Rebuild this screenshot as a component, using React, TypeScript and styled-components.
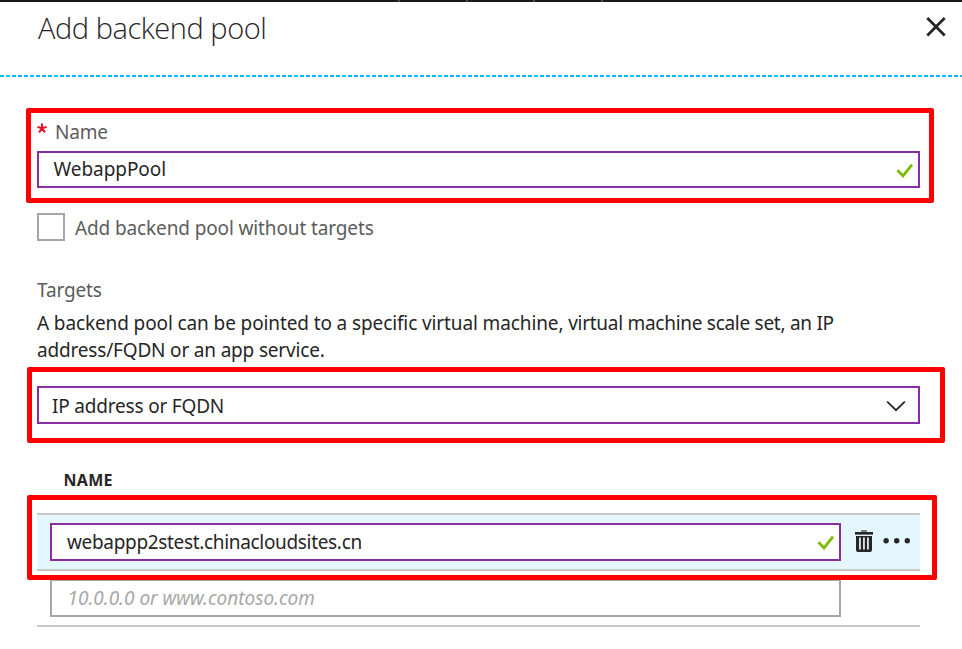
import React from "react";
import styled, { createGlobalStyle } from "styled-components";

const GlobalStyle = createGlobalStyle`
  * { box-sizing: border-box; }
  html, body { margin: 0; background: #fff; overflow: hidden; }
  body { font-family: "Noto Sans", "Open Sans", sans-serif; color: #262626; }
`;

const Blade = styled.main`
  position: relative;
  width: 962px;
  height: 649px;
  overflow: hidden;
  background: #fff;
`;

const TopEdge = styled.div`
  height: 2px;
  padding-left: 398px;
  display: flex;
  gap: 65.5px;
  background: #1b1a1b;
`;

const Tick = styled.span`
  width: 2px;
  height: 2px;
  background: #4a4a4a;
`;

const Header = styled.header`
  height: 73px;
  padding: 5px 16px 0 37px;
  display: flex;
  justify-content: space-between;
  align-items: flex-start;
`;

const Title = styled.h1`
  margin: 0;
  font-family: "Open Sans", "Noto Sans", sans-serif;
  font-size: 29px;
  font-weight: 300;
  line-height: 42px;
  letter-spacing: -0.45px;
  padding-left: 1px;
  white-space: nowrap;
`;

const IconButton = styled.button<{ $w: number; $h: number }>`
  width: ${(p) => p.$w}px;
  height: ${(p) => p.$h}px;
  padding: 0;
  border: 0;
  background: none;
  display: block;
  flex: none;
  svg { display: block; }
`;

const CloseButton = styled(IconButton)`
  margin-top: 9px;
`;

const Divider = styled.div`
  height: 2px;
  background: repeating-linear-gradient(90deg, #00bcf2 0 4px, #fff 4px 6px);
`;

const Form = styled.form`
  width: 883px;
  margin-left: 37px;
  padding-top: 42px;
  display: flex;
  flex-direction: column;
`;

const Label = styled.label<{ $spacing: number }>`
  height: 27px;
  line-height: 27px;
  font-size: 19px;
  letter-spacing: ${(p) => p.$spacing}px;
  color: #5c5c5c;
  white-space: nowrap;
`;

const FieldHead = styled.div`
  height: 32px;
  display: flex;
  gap: 8px;
`;

const Required = styled.span`
  width: 10px;
  height: 27px;
  svg { display: block; margin-top: 4px; }
`;

const Field = styled.div<{ $active?: boolean; $h: number; $right: number }>`
  height: ${(p) => p.$h}px;
  padding: 0 ${(p) => p.$right}px 0 0;
  border: 2px solid ${(p) => (p.$active ? "#892da3" : "#a6a6a6")};
  background: #fff;
  display: flex;
  align-items: center;
  justify-content: space-between;
  svg { flex: none; display: block; margin-top: 2px; }
`;

const Value = styled.span<{ $left: number; $spacing: number; $hint?: boolean; $drop?: number }>`
  margin-left: ${(p) => p.$left}px;
  padding-top: ${(p) => p.$drop ?? 0}px;
  font-size: 19px;
  line-height: 27px;
  letter-spacing: ${(p) => p.$spacing}px;
  font-style: ${(p) => (p.$hint ? "italic" : "normal")};
  color: ${(p) => (p.$hint ? "#a8a8a8" : "#262626")};
  white-space: nowrap;
`;

const CheckRow = styled.div`
  height: 28px;
  margin-top: 25px;
  display: flex;
  align-items: flex-start;
  gap: 10px;
  label { padding-top: 2px; }
`;

const CheckBox = styled.span`
  width: 28px;
  height: 28px;
  border: 2px solid #a6a6a6;
`;

const Targets = styled.section`
  margin-top: 36px;
  display: flex;
  flex-direction: column;
`;

const Description = styled.p`
  margin: 6px 0 22px;
  height: 54px;
  font-size: 19px;
  line-height: 27px;
  white-space: nowrap;
`;

const Run = styled.span<{ $spacing: number }>`
  letter-spacing: ${(p) => p.$spacing}px;
`;

const ColumnHead = styled.div`
  height: 89px;
  padding: 43px 0 0 26.5px;
  font-size: 16px;
  font-weight: 700;
  line-height: 27px;
  letter-spacing: 0.3px;
`;

const ActiveRow = styled.div`
  height: 58px;
  padding: 8px 9px 0 13px;
  border: solid #c8c8c8;
  border-width: 2px 0;
  background: #e4f7fe;
  display: flex;
  align-items: flex-start;
`;

const EntryField = styled(Field)`
  width: 791px;
  flex: none;
`;

const Actions = styled.div`
  margin: 6px 0 0 14px;
  display: flex;
  gap: 9px;
`;

const EmptyRow = styled.div`
  height: 56px;
  padding: 8px 0 0 13px;
  border-bottom: 2px solid #c8c8c8;
`;

const Highlight = styled.div<{ $x: number; $y: number; $w: number; $h: number }>`
  position: absolute;
  left: ${(p) => p.$x}px;
  top: ${(p) => p.$y}px;
  width: ${(p) => p.$w}px;
  height: ${(p) => p.$h}px;
  border: 5px solid #f00;
  border-radius: 2px;
  pointer-events: none;
`;

const Check = () => (
  <svg width="18" height="16" viewBox="0 0 18 16" fill="none" stroke="#7fba00" strokeWidth="2.8">
    <path d="M1.4 7.2 L7 12.8 L16 1.6" />
  </svg>
);

const Asterisk = () => (
  <svg width="10" height="11" viewBox="0 0 10 11" stroke="#e81123" strokeWidth="2">
    <path d="M5 5.3V0.4M5 5.3L0.4 3.9M5 5.3L9.6 3.9M5 5.3L2.1 9.4M5 5.3L7.9 9.4" />
  </svg>
);

export default function App() {
  return (
    <>
      <GlobalStyle />
      <Blade>
        <TopEdge>
          <Tick />
          <Tick />
          <Tick />
          <Tick />
        </TopEdge>
        <Header>
          <Title>Add backend pool</Title>
          <CloseButton $w={20} $h={22} type="button" aria-label="Close">
            <svg width="20" height="22" viewBox="0 0 20 22" stroke="#262626" strokeWidth="2.8">
              <path d="M1.3 2L18.7 19.4M18.7 2L1.3 19.4" />
            </svg>
          </CloseButton>
        </Header>
        <Divider />
        <Form>
          <FieldHead>
            <Required><Asterisk /></Required>
            <Label $spacing={-0.2}>Name</Label>
          </FieldHead>
          <Field $active $h={37} $right={4}>
            <Value $left={14.5} $spacing={-0.05}>WebappPool</Value>
            <Check />
          </Field>
          <CheckRow>
            <CheckBox role="checkbox" aria-checked="false" />
            <Label $spacing={-0.125}>Add backend pool without targets</Label>
          </CheckRow>
          <Targets>
            <Label $spacing={-0.15}>Targets</Label>
            <Description>
              <Run $spacing={-0.115}>A backend pool can be pointed to a specific virtual machine, </Run>
              <Run $spacing={-0.28}>virtual machine scale set, an IP</Run>
              <br />
              <Run $spacing={-0.18}>address/FQDN or an app service.</Run>
            </Description>
            <Field $active $h={38} $right={12}>
              <Value $left={13} $spacing={-0.19} $drop={2}>IP address or FQDN</Value>
              <svg width="20" height="12" viewBox="0 0 20 12" fill="none" stroke="#262626" strokeWidth="1.8">
                <path d="M1.2 1.6L10 10.2L18.8 1.6" />
              </svg>
            </Field>
          </Targets>
          <ColumnHead>NAME</ColumnHead>
          <ActiveRow>
            <EntryField $active $h={38} $right={4}>
              <Value $left={15} $spacing={-0.33}>webappp2stest.chinacloudsites.cn</Value>
              <Check />
            </EntryField>
            <Actions>
              <IconButton $w={18} $h={24} type="button" aria-label="Delete">
                <svg width="18" height="24" viewBox="0 0 18 24">
                  <path d="M6 1h6v2H6z" fill="#7f8688" />
                  <path d="M0 3h18v2.6H0z" fill="#262626" />
                  <path d="M1 7h16v14q0 2-2 2H3q-2 0-2-2z" fill="#262626" />
                  <path d="M4.1 8.5h1.7v12H4.1zM8.1 8.5h1.7v12H8.1zM12.1 8.5h1.7v12h-1.7z" fill="#e4f7fe" />
                </svg>
              </IconButton>
              <IconButton $w={30} $h={24} type="button" aria-label="More">
                <svg width="30" height="24" viewBox="0 0 30 24" fill="#262626">
                  <circle cx="4.1" cy="11.7" r="2.7" />
                  <circle cx="14.7" cy="11.7" r="2.7" />
                  <circle cx="25.3" cy="11.7" r="2.7" />
                </svg>
              </IconButton>
            </Actions>
          </ActiveRow>
          <EmptyRow>
            <EntryField $h={38} $right={5}>
              <Value $left={15.5} $spacing={0} $hint>10.0.0.0 or www.contoso.com</Value>
            </EntryField>
          </EmptyRow>
        </Form>
        <Highlight $x={26} $y={108} $w={908} $h={95} />
        <Highlight $x={27} $y={367} $w={918} $h={76} />
        <Highlight $x={27} $y={495} $w={910} $h={85} />
      </Blade>
    </>
  );
}
